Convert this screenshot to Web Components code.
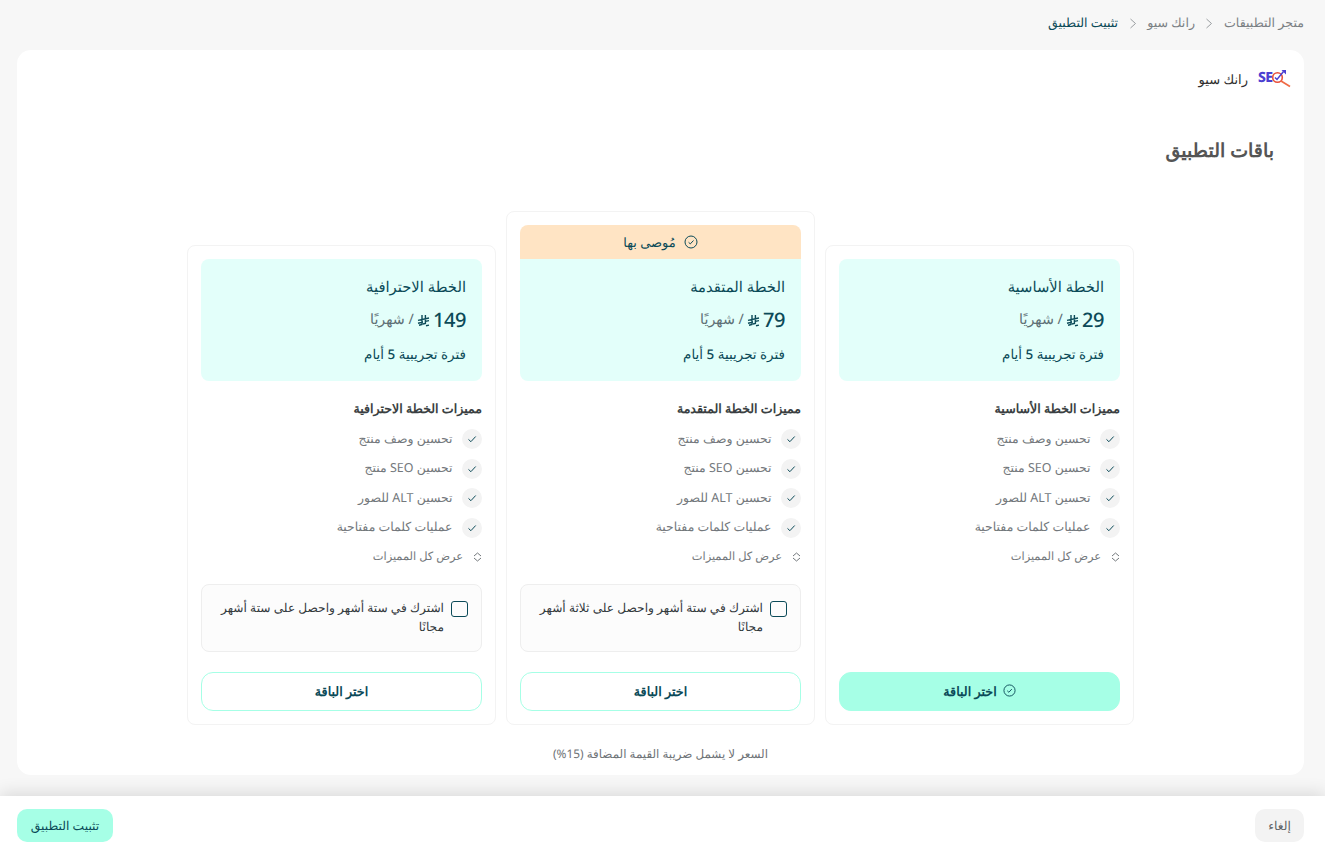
<!DOCTYPE html>
<html lang="ar" dir="rtl"><head><meta charset="utf-8"><style>
html,body{margin:0;height:850px;overflow:hidden}
body{background:#f7f7f7;font-family:"Noto Sans",sans-serif;color:#333;display:flex;flex-direction:column;text-rendering:geometricPrecision}
</style></head><body>
<app-breadcrumb><span>متجر التطبيقات</span><bread-sep></bread-sep><span>رانك سيو</span><bread-sep></bread-sep><span style="color:#0b4a58">تثبيت التطبيق</span></app-breadcrumb>
<app-panel>
  <plan-card name="الخطة الأساسية" price="29" trial="فترة تجريبية 5 أيام" ftitle="مميزات الخطة الأساسية" selected>
    <plan-feature>تحسين وصف منتج</plan-feature><plan-feature>تحسين SEO منتج</plan-feature><plan-feature>تحسين ALT للصور</plan-feature><plan-feature>عمليات كلمات مفتاحية</plan-feature>
  </plan-card>
  <plan-card name="الخطة المتقدمة" price="79" trial="فترة تجريبية 5 أيام" ftitle="مميزات الخطة المتقدمة" recommended offer="اشترك في ستة أشهر واحصل على ثلاثة أشهر مجانًا">
    <plan-feature>تحسين وصف منتج</plan-feature><plan-feature>تحسين SEO منتج</plan-feature><plan-feature>تحسين ALT للصور</plan-feature><plan-feature>عمليات كلمات مفتاحية</plan-feature>
  </plan-card>
  <plan-card name="الخطة الاحترافية" price="149" trial="فترة تجريبية 5 أيام" ftitle="مميزات الخطة الاحترافية" offer="اشترك في ستة أشهر واحصل على ستة أشهر مجانًا">
    <plan-feature>تحسين وصف منتج</plan-feature><plan-feature>تحسين SEO منتج</plan-feature><plan-feature>تحسين ALT للصور</plan-feature><plan-feature>عمليات كلمات مفتاحية</plan-feature>
  </plan-card>
</app-panel>
<app-bottombar></app-bottombar>
<script>
const CHECK_CIRCLE='<svg width="14" height="14" viewBox="0 0 14 14" fill="none" stroke="currentColor" stroke-width="1"><circle cx="7" cy="7" r="6"/><path d="M4.6 7.3l1.7 1.6 3.2-3.4"/></svg>';
function def(name,html){customElements.define(name,class extends HTMLElement{connectedCallback(){if(this.shadowRoot)return;const r=this.attachShadow({mode:'open'});r.innerHTML=typeof html==='function'?html(this):html;}})}
def('bread-sep',`<style>:host{display:flex;align-items:center}</style><svg width="8" height="11" viewBox="0 0 8 11" fill="none" stroke="#9a9ea1" stroke-width="1"><path d="M1.5 1l5 4.5-5 4.5"/></svg>`);
def('app-breadcrumb',`<style>:host{display:flex;align-items:center;gap:10.5px;height:50px;box-sizing:border-box;padding:0 21px 4px 0;font-size:12.6px;line-height:18px;color:#7b8084}</style><slot></slot>`);
def('app-logo',`<style>:host{display:flex;align-items:center;gap:9px;height:20px;font-size:13px;font-weight:500;color:#2e2e2e;margin-top:-1px}
.logo{position:relative;display:block;width:34px;height:20px;direction:ltr}
.t{position:absolute;left:1px;top:0;font:800 14px/18px "Noto Sans",sans-serif;color:#4b3fd1;letter-spacing:-.6px}
svg{position:absolute;left:0;top:0}</style><span class="logo"><span class="t">SE</span><svg width="34" height="20" viewBox="0 0 34 20" fill="none"><circle cx="20.5" cy="8.5" r="4.8" stroke="#e8503a" stroke-width="1.6"/><path d="M24 12l9 5.5" stroke="#ef6a45" stroke-width="1.7"/><path d="M18 8.5l2 2 6.5-8" stroke="#4b3fd1" stroke-width="1.5"/><path d="M24.5 1h4.5v4.5z" fill="#4b3fd1"/></svg></span><span>رانك سيو</span>`);
def('app-panel',`<style>:host{display:block;margin:0 21px 0 17px;height:725px;background:#fff;border-radius:14px;box-sizing:border-box;padding:20px 13px 0;position:relative}
h1{margin:46px 17px 0 0;font-size:19px;font-weight:700;line-height:30px;color:#555}
.grid{display:grid;grid-template-columns:repeat(3,309px);gap:10px;justify-content:center;align-items:end;margin-top:46px}
.note{margin-top:20px;text-align:center;font-size:11.9px;line-height:18px;color:#6f7478}</style>
<app-logo></app-logo><h1>باقات التطبيق</h1><div class="grid"><slot></slot></div><div class="note">السعر لا يشمل ضريبة القيمة المضافة (15%)</div>`);
def('plan-feature',`<style>:host{display:flex;align-items:center;gap:9.5px;height:20px;font-size:12.45px;color:#73787c}
i{flex:none;width:20px;height:20px;border-radius:50%;background:#f3f3f3;display:flex;align-items:center;justify-content:center;color:#0b4a58}
span{position:relative;top:-1px}</style>
<i><svg width="10" height="10" viewBox="0 0 10 10" fill="none" stroke="currentColor" stroke-width="1"><path d="M1.5 5.4l2.4 2.3 4.8-5.2"/></svg></i><span><slot></slot></span>`);
const RIYAL='<svg width="13" height="13" viewBox="0 0 13 13" fill="none" stroke="currentColor" stroke-width="1.4"><path d="M5 1v9.4L2 11.2M8.4 1v8.4L6 10M1 6.4l11-2.4M1 9.2l5-1.1M8.4 7.4L12 6.6M9 11.8l3-.7"/></svg>';
def('plan-card',h=>{const g=a=>h.getAttribute(a);const rec=h.hasAttribute('recommended'),sel=h.hasAttribute('selected'),offer=g('offer');
return `<style>:host{display:flex;flex-direction:column;box-sizing:border-box;background:#fff;border:1px solid #f3f3f3;border-radius:8px;padding:13px;height:${rec?514:480}px;color:#0b4a58}
.badge{height:34px;background:#ffe4c4;border-radius:8px 8px 0 0;display:flex;align-items:center;justify-content:center;gap:8px;font-size:13px;font-weight:500}
.head{height:122px;box-sizing:border-box;background:#e3fffa;padding:17px 16px 0;border-radius:${rec?'0 0 8px 8px':'8px'}}
.n{font-size:14.8px;line-height:22px;font-weight:500}
.p{display:flex;align-items:center;gap:3px;margin-top:9px;line-height:26px;font-size:14.3px;color:#5d6f75}
.p b{font-size:20px;font-weight:500;color:#0b4a58;direction:ltr;letter-spacing:-.4px}.p svg{color:#0b4a58;flex:none}
.tr{margin-top:11px;font-size:13.45px;line-height:20px;font-weight:500}
.ft{margin-top:18px;font-size:12.6px;font-weight:600;line-height:20px;color:#3a3f42}
.list{display:flex;flex-direction:column;gap:9.6px;margin-top:10px}
.all{display:flex;align-items:center;gap:10px;margin:9px 0 0;height:20px;font-size:11.4px;color:#73787c}
.offer{margin-top:17px;height:68px;box-sizing:border-box;background:#fcfcfc;border:1px solid #eeeeee;border-radius:8px;padding:13px 13px 0 8px;display:flex;gap:7px;font-size:12.2px;line-height:19px;color:#33393c}
.box{flex:none;box-sizing:border-box;width:17px;height:16px;margin-top:3px;border:1.5px solid #0b4a58;border-radius:3px}
.btn{margin-top:auto;height:39px;box-sizing:border-box;padding-bottom:2px;border-radius:12px;border:1px solid #a6ffe6;display:flex;align-items:center;justify-content:center;gap:6px;font-size:12.7px;font-weight:700;background:${sel?'#a6ffe6':'#fff'}}
</style>
${rec?`<div class="badge">${CHECK_CIRCLE}<span>مُوصى بها</span></div>`:''}
<div class="head"><div class="n">${g('name')}</div><div class="p"><b>${g('price')}</b>${RIYAL}<span>/ شهريًا</span></div><div class="tr">${g('trial')}</div></div>
<div class="ft">${g('ftitle')}</div><div class="list"><slot></slot></div>
<div class="all"><svg width="9" height="10" viewBox="0 0 9 10" fill="none" stroke="currentColor"><path d="M1 4l3.5-3L8 4M1 6l3.5 3L8 6"/></svg><span>عرض كل المميزات</span></div>
${offer?`<div class="offer"><span class="box"></span><span>${offer}</span></div>`:''}
<div class="btn">${sel?CHECK_CIRCLE.replace('width="14" height="14"','width="13" height="13"'):''}<span>اختر الباقة</span></div>`});
def('app-bottombar',`<style>:host{display:flex;justify-content:space-between;align-items:center;margin-top:auto;height:54px;box-sizing:border-box;padding:5px 21px 0 17px;background:#fff;box-shadow:0 -3px 16px rgba(0,0,0,.12);font-size:12.3px}
span{display:flex;align-items:center;justify-content:center;height:33px;border-radius:10px}
.c{width:49px;background:#f3f3f3;color:#5f6366}.i{width:96px;background:#a6ffe6;color:#0b4a58}</style><span class="c">إلغاء</span><span class="i">تثبيت التطبيق</span>`);
</script></body></html>
